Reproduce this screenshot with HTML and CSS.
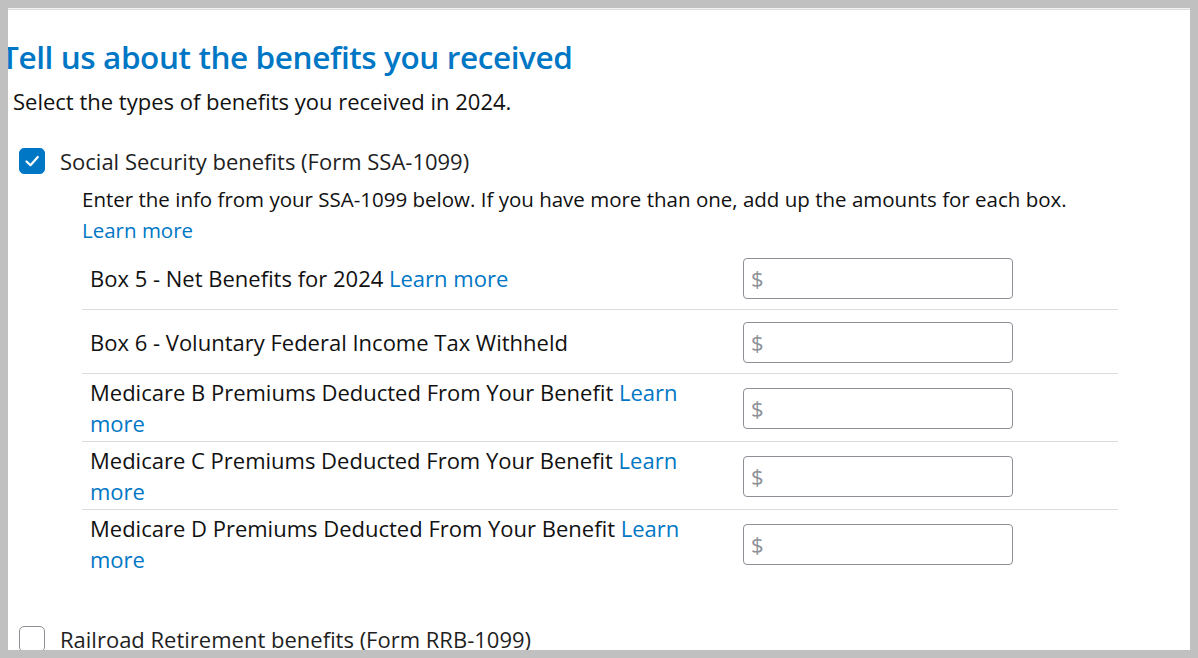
FILE: index.html
```html
<!DOCTYPE html>
<html lang="en">
<head>
<meta charset="utf-8">
<title>Tell us about the benefits you received</title>
<link rel="stylesheet" href="styles.css">
</head>
<body>
<div class="frame">
  <div class="panel">
    <h1 class="title">Tell us about the benefits you received</h1>
    <p class="subtitle">Select the types of benefits you received in 2024.</p>

    <div class="check-row">
      <span class="checkbox checked">
        <svg viewBox="0 0 26 26" width="26" height="26"><polyline points="7.5,13.5 11.5,17.2 18.8,9" fill="none" stroke="#fff" stroke-width="2.2" stroke-linecap="round" stroke-linejoin="round"/></svg>
      </span>
      <span class="check-label">Social Security benefits (Form SSA-1099)</span>
    </div>

    <div class="details">
      <p class="intro">Enter the info from your SSA-1099 below. If you have more than one, add up the amounts for each box.<br><a class="link" href="#">Learn more</a></p>

      <div class="rows">
        <div class="row">
          <div class="label">Box 5 - Net Benefits for 2024 <a class="link" href="#">Learn more</a></div>
          <div class="field"><span class="dollar">$</span></div>
        </div>
        <div class="row">
          <div class="label">Box 6 - Voluntary Federal Income Tax Withheld</div>
          <div class="field"><span class="dollar">$</span></div>
        </div>
        <div class="row">
          <div class="label">Medicare B Premiums Deducted From Your Benefit <a class="link" href="#">Learn more</a></div>
          <div class="field"><span class="dollar">$</span></div>
        </div>
        <div class="row">
          <div class="label">Medicare C Premiums Deducted From Your Benefit <a class="link" href="#">Learn more</a></div>
          <div class="field"><span class="dollar">$</span></div>
        </div>
        <div class="row last">
          <div class="label">Medicare D Premiums Deducted From Your Benefit <a class="link" href="#">Learn more</a></div>
          <div class="field"><span class="dollar">$</span></div>
        </div>
      </div>
    </div>

    <div class="check-row second">
      <span class="checkbox"></span>
      <span class="check-label">Railroad Retirement benefits (Form RRB-1099)</span>
    </div>
  </div>
</div>
</body>
</html>
```

FILE: styles.css
```css
html, body {
  margin: 0;
  padding: 0;
  background: #c0c0c0;
}

body {
  font-family: "Open Sans", "Liberation Sans", sans-serif;
  color: #000;
  width: 1198px;
  height: 658px;
  overflow: hidden;
}

.frame {
  padding: 8px;
  height: 658px;
  box-sizing: border-box;
}

.panel {
  background: #fff;
  height: 642px;
  overflow: hidden;
  border-top: 1px solid #f2f2f2;
  box-shadow: inset 0 1px 0 #dcdcdc;
  box-sizing: border-box;
}

.title {
  margin: 28px 0 0 -7px;
  font-size: 31.5px;
  line-height: 40px;
  font-weight: 600;
  color: #0077c5;
  letter-spacing: -0.4px;
}

.subtitle {
  margin: 9px 0 0 5px;
  font-size: 22px;
  line-height: 30px;
  color: #111;
}

.check-row {
  display: flex;
  align-items: center;
  gap: 15px;
  margin: 30px 0 0 11px;
  height: 30px;
}

.check-row.second {
  margin-top: 47px;
}

.checkbox {
  width: 26px;
  height: 26px;
  flex: none;
  box-sizing: border-box;
  border: 1px solid #8d9096;
  border-radius: 5px;
  background: #fff;
  display: flex;
}

.checkbox.checked {
  background: #0077c5;
  border-color: #0077c5;
}

.checkbox svg {
  margin: -1px;
}

.check-label {
  font-size: 22px;
  line-height: 30px;
  color: #1f1f1f;
}

.details {
  margin: 8px 72px 0 74px;
}

.intro {
  margin: 0;
  font-size: 20.5px;
  line-height: 31px;
  color: #111;
}

.link {
  color: #0077c5;
  text-decoration: none;
}

.rows {
  display: flex;
  flex-direction: column;
}

.row {
  display: flex;
  align-items: center;
  min-height: 58px;
  padding: 3px 0 2px 8px;
  border-bottom: 1px solid #d9dcdf;
  gap: 8px;
}

.row.last {
  border-bottom: none;
}

.label {
  width: 645px;
  flex: none;
  font-size: 22px;
  line-height: 31px;
  color: #111;
}

.field {
  width: 270px;
  height: 41px;
  box-sizing: border-box;
  border: 1px solid #8d9096;
  border-radius: 4px;
  display: flex;
  align-items: center;
  padding-left: 7px;
}

.dollar {
  color: #8d9096;
  font-size: 22px;
}
```
